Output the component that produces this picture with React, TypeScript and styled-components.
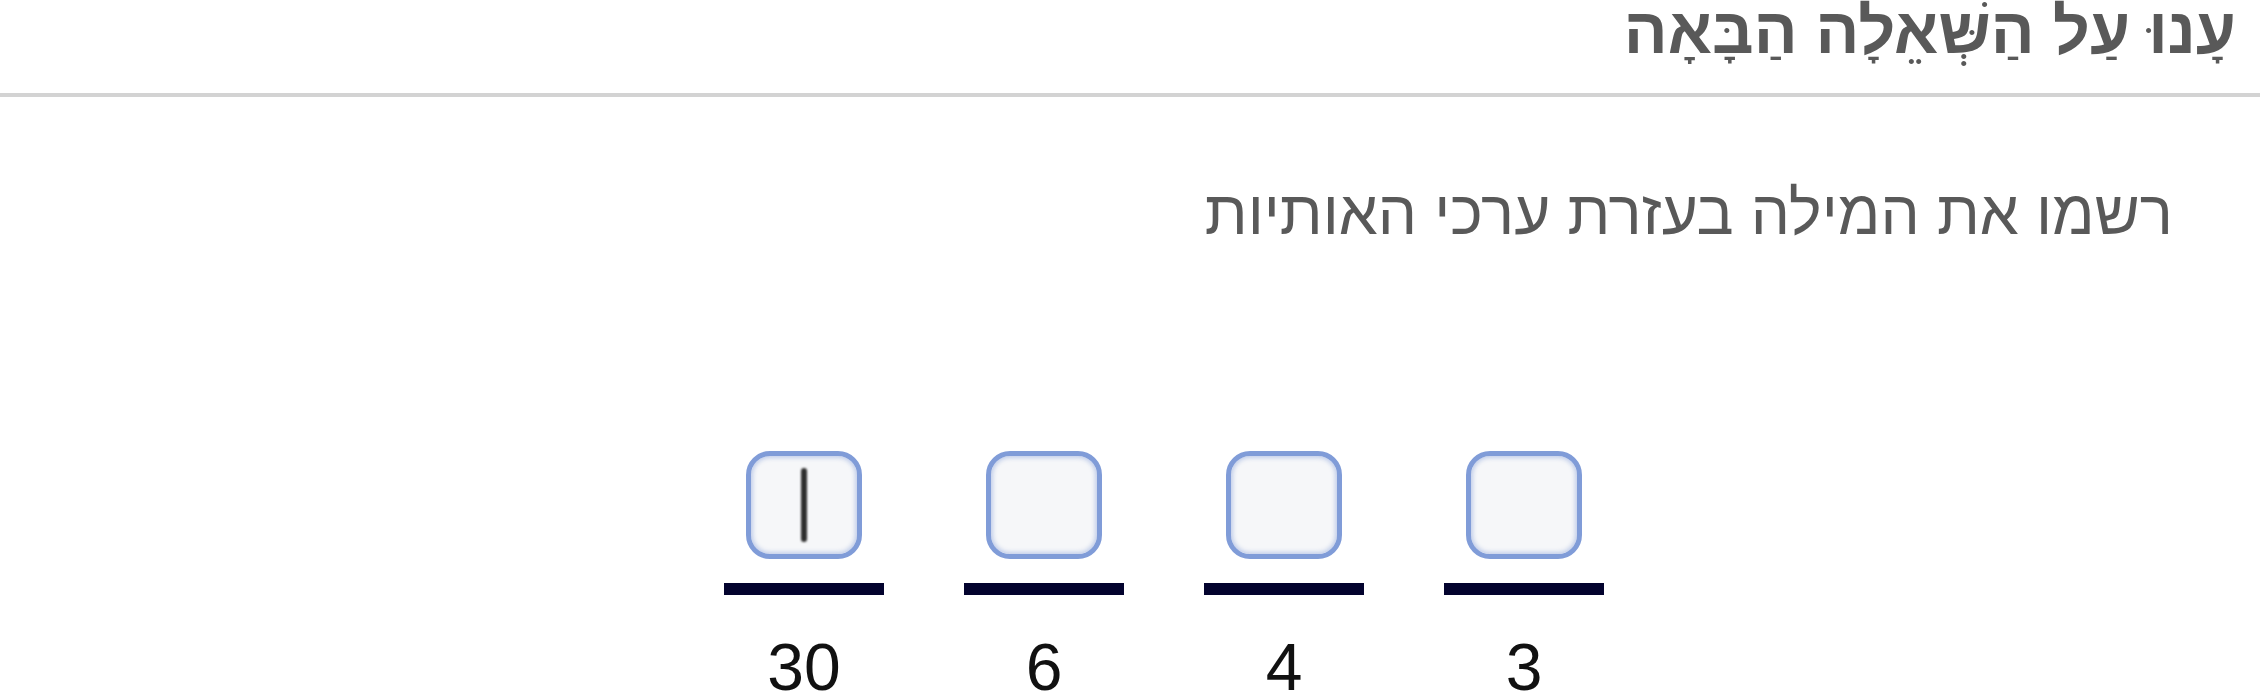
import styled, { createGlobalStyle } from "styled-components";

const GlobalStyle = createGlobalStyle`
	html, body {
		margin: 0;
		padding: 0;
		background: #ffffff;
	}
	body {
		font-family: "Liberation Sans", Arial, sans-serif;
		overflow: hidden;
	}
`;

const Page = styled.div`
	width: 2260px;
	height: 693px;
	overflow: hidden;
`;

const Header = styled.header`
	height: 93px;
	border-bottom: 4px solid #d3d3d3;
	direction: rtl;
	display: flex;
	align-items: flex-start;
	padding-right: 24px;
`;

const Title = styled.h1`
	margin: 0;
	font-family: "Liberation Sans", Arial, sans-serif;
	font-weight: 700;
	font-size: 65px;
	line-height: 62px;
	color: #595959;
	white-space: nowrap;
`;

const Instruction = styled.p`
	margin: 84px 0 0;
	direction: rtl;
	padding-right: 87px;
	font-family: "Liberation Sans", Arial, sans-serif;
	font-size: 62px;
	line-height: 64px;
	color: #595959;
`;

const AnswerRow = styled.div`
	display: flex;
	justify-content: center;
	gap: 80px;
	padding-left: 68px;
	margin-top: 206px;
`;

const Column = styled.div`
	width: 160px;
	display: flex;
	flex-direction: column;
	align-items: center;
`;

const LetterBox = styled.div`
	width: 116px;
	height: 108px;
	box-sizing: border-box;
	border: 5px solid #809cd8;
	border-radius: 24px;
	background: #f6f7f9;
	box-shadow: inset 0 0 4px 2px rgba(128, 156, 216, 0.45);
	display: flex;
	align-items: center;
	justify-content: center;
`;

const Caret = styled.span`
	width: 6px;
	height: 74px;
	border-radius: 3px;
	background: #2e2e2e;
	filter: blur(1px);
`;

const Bar = styled.div`
	width: 160px;
	height: 12px;
	margin-top: 24px;
	background: #03032e;
`;

const Value = styled.div`
	margin-top: 47px;
	font-family: "Liberation Sans", Arial, sans-serif;
	font-size: 66px;
	line-height: 50px;
	color: #111111;
`;

const values = [30, 6, 4, 3];

export default function App() {
	return (
		<Page>
			<GlobalStyle />
			<Header>
				<Title>עָנוּ עַל הַשְּׁאֵלָה הַבָּאָה</Title>
			</Header>
			<Instruction>רשמו את המילה בעזרת ערכי האותיות</Instruction>
			<AnswerRow>
				{values.map((v, i) => (
					<Column key={i}>
						<LetterBox>{i === 0 && <Caret />}</LetterBox>
						<Bar />
						<Value>{v}</Value>
					</Column>
				))}
			</AnswerRow>
		</Page>
	);
}
